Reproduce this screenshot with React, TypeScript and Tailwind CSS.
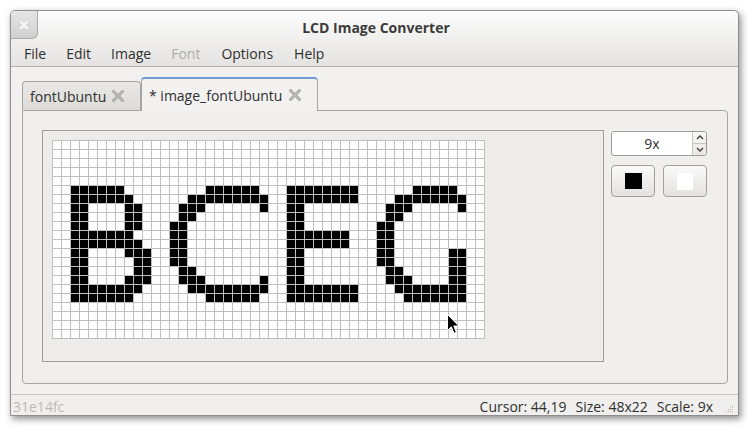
import React from "react";

// filled pixel ranges per row of the 48x22 bitmap
const ROWS: Record<number, [number, number][]> = {
  5: [[2, 7], [17, 22], [26, 33], [40, 44]],
  6: [[2, 8], [15, 23], [26, 33], [38, 45]],
  7: [[2, 3], [8, 9], [14, 16], [23, 23], [26, 27], [37, 39], [45, 45]],
  8: [[2, 3], [8, 9], [14, 15], [26, 27], [37, 38]],
  9: [[2, 3], [8, 9], [13, 14], [26, 27], [36, 37]],
  10: [[2, 8], [13, 14], [26, 32], [36, 37]],
  11: [[2, 9], [13, 14], [26, 32], [36, 37]],
  12: [[2, 3], [8, 10], [13, 14], [26, 27], [36, 37], [44, 45]],
  13: [[2, 3], [9, 10], [13, 14], [26, 27], [36, 37], [44, 45]],
  14: [[2, 3], [9, 10], [14, 15], [26, 27], [37, 38], [44, 45]],
  15: [[2, 3], [8, 10], [14, 16], [23, 23], [26, 27], [37, 39], [44, 45]],
  16: [[2, 9], [15, 23], [26, 33], [38, 45]],
  17: [[2, 8], [17, 22], [26, 33], [39, 45]],
};

function isOn(r: number, c: number) {
  return (ROWS[r] ?? []).some(([a, b]) => c >= a && c <= b);
}

const FONT = "font-['Open_Sans','DejaVu_Sans',sans-serif]";

function TabClose() {
  return (
    <svg width="14" height="14" viewBox="0 0 14 14" className="shrink-0">
      <path d="M2.5 2.5 L11.5 11.5 M11.5 2.5 L2.5 11.5" stroke="#a3a3a1" strokeWidth="3" strokeLinecap="round" />
      <path d="M2.5 2.5 L11.5 11.5 M11.5 2.5 L2.5 11.5" stroke="#bdbcba" strokeWidth="1.2" strokeLinecap="round" />
    </svg>
  );
}

function PixelGrid() {
  const cells = [];
  for (let r = 0; r < 22; r++) {
    for (let c = 0; c < 48; c++) {
      cells.push(<div key={`${r}-${c}`} className={isOn(r, c) ? "h-[8px] bg-black" : "h-[8px] bg-white"} />);
    }
  }
  return (
    <div className="relative w-fit">
      <div className="grid w-fit grid-cols-[repeat(48,8px)] gap-px bg-[#bebebe] p-px">{cells}</div>
      {/* mouse pointer over the canvas */}
      <svg width="13" height="21" viewBox="0 0 13 21" className="absolute left-[395px] top-[174px]">
        <path d="M0.5 0.5 L0.5 16.5 L4.3 12.8 L7 19.3 L9.4 18.3 L6.8 12 L11.8 12 Z" fill="#000" stroke="#fff" strokeWidth="1" strokeLinejoin="round" />
      </svg>
    </div>
  );
}

export default function App() {
  return (
    <div className={`h-[433px] w-[756px] overflow-hidden bg-white pl-[10px] pt-[10px] ${FONT}`}>
      <div className="flex h-[406px] w-[729px] flex-col rounded-t-[5px] border border-[#8e8e8e] bg-[#f2f1f0] shadow-[2px_3px_7px_rgba(0,0,0,0.45)]">
        {/* title + menu */}
        <div className="flex h-[56px] flex-col rounded-t-[5px] border-b border-[#b3b1ad] bg-gradient-to-b from-[#fcfcfc] to-[#e4e3e1]">
          <div className="relative flex h-[29px] items-center justify-center">
            <div className="absolute left-0 top-0 flex h-[28px] w-[27px] items-center justify-center rounded-br-[6px] rounded-tl-[4px] border-b border-r border-[#a9a9a9] bg-gradient-to-b from-[#e6e6e6] to-[#cfcfcf]">
              <svg width="8" height="8" viewBox="0 0 8 8">
                <path d="M1 1 L7 7 M7 1 L1 7" stroke="#fbfbfb" strokeWidth="1.8" strokeLinecap="round" />
              </svg>
            </div>
            <span className="pl-[3px] pt-[3px] text-[14px] font-bold text-[#3c3c3c]">LCD Image Converter</span>
          </div>
          <div className="flex h-[26px] items-center pl-[3px] text-[14px] text-[#2f2f2f]">
            <span className="px-[10px]">File</span>
            <span className="px-[10px]">Edit</span>
            <span className="px-[10px]">Image</span>
            <span className="px-[10px] text-[#adadad]">Font</span>
            <span className="px-[11px]">Options</span>
            <span className="px-[10px]">Help</span>
          </div>
        </div>

        {/* body */}
        <div className="flex flex-1 flex-col px-[11px] pb-[10px] pt-[10px]">
          <div className="flex h-[33px] items-end">
            <div className="flex h-[29px] w-[119px] items-center gap-[5px] rounded-t-[4px] border border-b-0 border-[#a7a5a1] bg-gradient-to-b from-[#e9e8e6] to-[#dcdbd8] pl-[7px] text-[14px] text-[#2f2f2f]">
              <span>fontUbuntu</span>
              <TabClose />
            </div>
            <div className="relative z-10 -mb-px flex h-[34px] w-[177px] items-center gap-[6px] rounded-t-[4px] border border-b-0 border-[#a7a5a1] border-t-2 border-t-[#6f9ad3] bg-[#f2f1f0] pl-[7px] text-[14px] text-[#2f2f2f]">
              <span>* image_fontUbuntu</span>
              <TabClose />
            </div>
          </div>
          <div className="flex h-[274px] w-[706px] rounded-b-[4px] rounded-tr-[4px] border border-[#a7a5a1] bg-[#f0efed] pl-[19px] pt-[19px]">
            <div className="h-[232px] w-[562px] border border-[#a09e9a] bg-[#edecea] pl-[9px] pt-[9px]">
              <PixelGrid />
            </div>
            <div className="ml-[7px] flex flex-col pt-px">
              <div className="flex h-[25px] w-[96px] overflow-hidden rounded-[3px] border border-[#9c9a96] bg-white">
                <div className="flex w-[80px] items-center justify-center text-[14px] text-[#2f2f2f]">9x</div>
                <div className="flex flex-1 flex-col border-l border-[#c9c7c3] bg-gradient-to-b from-[#f8f8f7] to-[#e9e8e6]">
                  <div className="flex flex-1 items-center justify-center border-b border-[#c9c7c3]">
                    <svg width="8" height="5" viewBox="0 0 8 5"><path d="M1 4 L4 1 L7 4" stroke="#3a3a3a" strokeWidth="1.3" fill="none" /></svg>
                  </div>
                  <div className="flex flex-1 items-center justify-center">
                    <svg width="8" height="5" viewBox="0 0 8 5"><path d="M1 1 L4 4 L7 1" stroke="#3a3a3a" strokeWidth="1.3" fill="none" /></svg>
                  </div>
                </div>
              </div>
              <div className="mt-[9px] flex gap-[8px]">
                <div className="flex h-[32px] w-[44px] items-center justify-center rounded-[4px] border border-[#a3a19d] bg-gradient-to-b from-[#fafafa] to-[#e3e2e0]">
                  <div className="h-[16px] w-[17px] bg-black" />
                </div>
                <div className="flex h-[32px] w-[44px] items-center justify-center rounded-[4px] border border-[#a3a19d] bg-gradient-to-b from-[#fafafa] to-[#e3e2e0]">
                  <div className="h-[17px] w-[16px] bg-white" />
                </div>
              </div>
            </div>
          </div>
        </div>

        {/* status bar */}
        <div className="flex h-[21px] items-center border-t border-[#c7c5c1] bg-[#f0efed] pl-[2px] pr-[4px] pt-[2px] text-[14px]">
          <span className="text-[#bbbab8]">31e14fc</span>
          <span className="ml-auto text-[#2f2f2f]">Cursor: 44,19</span>
          <span className="ml-[9px] text-[#2f2f2f]">Size: 48x22</span>
          <span className="ml-[9px] text-[#2f2f2f]">Scale: 9x</span>
          <svg width="10" height="10" viewBox="0 0 10 10" className="ml-[11px] mt-[4px]">
            <g fill="#b8b6b2">
              <rect x="8" y="2" width="1" height="1" />
              <rect x="6" y="4" width="1" height="1" />
              <rect x="8" y="4" width="1" height="1" />
              <rect x="4" y="6" width="1" height="1" />
              <rect x="6" y="6" width="1" height="1" />
              <rect x="8" y="6" width="1" height="1" />
              <rect x="2" y="8" width="1" height="1" />
              <rect x="4" y="8" width="1" height="1" />
              <rect x="6" y="8" width="1" height="1" />
              <rect x="8" y="8" width="1" height="1" />
            </g>
          </svg>
        </div>
      </div>
    </div>
  );
}
